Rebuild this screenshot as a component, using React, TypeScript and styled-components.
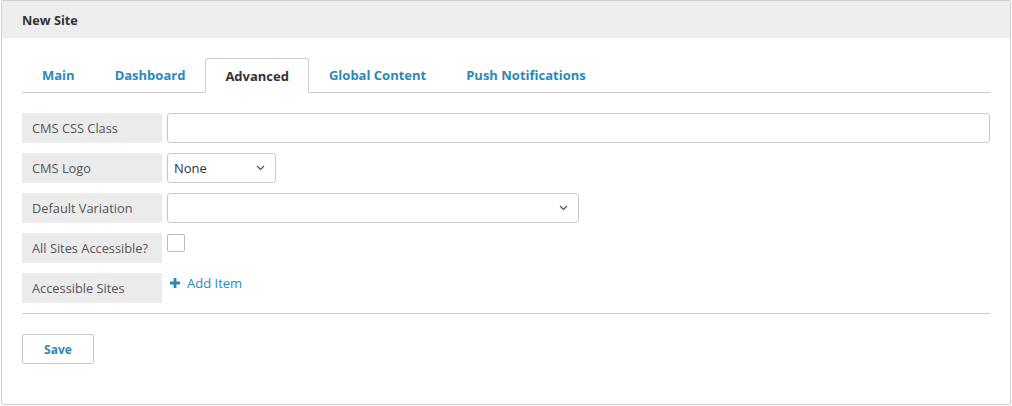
import styled, { createGlobalStyle } from "styled-components"

const GlobalStyle = createGlobalStyle`
  html, body {
    margin: 0;
    padding: 0;
    background: #ffffff;
    font-family: "Open Sans", "Liberation Sans", sans-serif;
    color: #333333;
  }
`

const tabs = ["Main", "Dashboard", "Advanced", "Global Content", "Push Notifications"]

const App: React.FC = () => {
  return (
    <>
      <GlobalStyle />
      <Panel>
        <Header>New Site</Header>
        <Body>
          <TabBar>
            {tabs.map((t) => (
              <Tab key={t} $active={t === "Advanced"}>
                {t}
              </Tab>
            ))}
          </TabBar>

          <Form>
            <Row>
              <Label>CMS CSS Class</Label>
              <TextInput />
            </Row>
            <Row>
              <Label>CMS Logo</Label>
              <Select $width={109}>
                <span>None</span>
                <Chevron />
              </Select>
            </Row>
            <Row>
              <Label>Default Variation</Label>
              <Select $width={412}>
                <span />
                <Chevron />
              </Select>
            </Row>
            <Row>
              <Label>All Sites Accessible?</Label>
              <Checkbox />
            </Row>
            <Row>
              <Label>Accessible Sites</Label>
              <AddItem>
                <PlusIcon />
                Add Item
              </AddItem>
            </Row>
          </Form>

          <Divider />

          <SaveButton>Save</SaveButton>
        </Body>
      </Panel>
    </>
  )
}

const Chevron: React.FC = () => (
  <svg width="9" height="6" viewBox="0 0 9 6">
    <path d="M1 1 L4.5 4.5 L8 1" fill="none" stroke="#555" strokeWidth="1.2" />
  </svg>
)

const PlusIcon: React.FC = () => (
  <svg width="10" height="10" viewBox="0 0 10 10">
    <path d="M3.6 0h2.8v3.6H10v2.8H6.4V10H3.6V6.4H0V3.6h3.6z" fill="#2a8ab5" />
  </svg>
)

const Panel = styled.div`
  margin: 0 1px;
  height: 405px;
  border: 1px solid #cfcfcf;
  border-radius: 2px;
  box-sizing: border-box;
  overflow: hidden;
`

const Header = styled.div`
  background: #eeeeee;
  height: 37px;
  padding: 0 20px;
  display: flex;
  align-items: center;
  font-size: 12.7px;
  font-weight: 700;
  color: #333333;
`

const Body = styled.div`
  padding: 20px 20px 0 20px;
`

const TabBar = styled.div`
  display: flex;
  height: 34px;
  border-bottom: 1px solid #cccccc;
`

const Tab = styled.div<{ $active?: boolean }>`
  height: 35px;
  box-sizing: border-box;
  display: flex;
  align-items: center;
  padding: 0 19px;
  font-size: 13px;
  font-weight: 700;
  color: ${(p) => (p.$active ? "#333333" : "#2a8ab5")};
  background: ${(p) => (p.$active ? "#ffffff" : "transparent")};
  border: 1px solid ${(p) => (p.$active ? "#cccccc" : "transparent")};
  border-bottom-color: ${(p) => (p.$active ? "#ffffff" : "transparent")};
  border-radius: 3px 3px 0 0;
  position: relative;
  z-index: ${(p) => (p.$active ? 1 : 0)};
  height: ${(p) => (p.$active ? 35 : 34)}px;
`

const Form = styled.div`
  display: flex;
  flex-direction: column;
  gap: 10px;
  padding-top: 20px;
`

const Row = styled.div`
  display: flex;
  align-items: flex-start;
  gap: 5px;
  min-height: 30px;
`

const Label = styled.div`
  flex: none;
  width: 140px;
  height: 30px;
  box-sizing: border-box;
  padding-left: 10px;
  display: flex;
  align-items: center;
  background: #ebebeb;
  font-size: 12.8px;
  color: #555555;
`

const TextInput = styled.div`
  flex: 1;
  height: 30px;
  box-sizing: border-box;
  border: 1px solid #c8c8c8;
  border-radius: 3px;
  background: #ffffff;
`

const Select = styled.div<{ $width: number }>`
  width: ${(p) => p.$width}px;
  height: 30px;
  box-sizing: border-box;
  border: 1px solid #c8c8c8;
  border-radius: 3px;
  background: #ffffff;
  display: flex;
  align-items: center;
  justify-content: space-between;
  padding: 0 10px 0 6px;
  font-size: 13px;
  color: #333333;
`

const Checkbox = styled.div`
  width: 18px;
  height: 18px;
  box-sizing: border-box;
  border: 1px solid #bbbbbb;
  border-radius: 2px;
  background: #ffffff;
  margin-top: 1px;
`

const AddItem = styled.div`
  display: flex;
  align-items: center;
  gap: 7px;
  padding: 1px 0 0 3px;
  font-size: 13px;
  color: #2a8ab5;
  line-height: 18px;
`

const Divider = styled.div`
  height: 1px;
  background: #cccccc;
  margin-top: 10px;
`

const SaveButton = styled.div`
  margin-top: 20px;
  width: 72px;
  height: 30px;
  box-sizing: border-box;
  border: 1px solid #c8c8c8;
  border-radius: 2px;
  display: flex;
  align-items: center;
  justify-content: center;
  font-size: 12px;
  font-weight: 700;
  color: #2a8ab5;
  background: #ffffff;
`

export default App
